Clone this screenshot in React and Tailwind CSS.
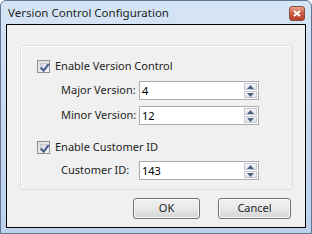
import React from "react";

const font = { fontFamily: '"Noto Sans", "Open Sans", sans-serif' };

function CheckBox({ label }) {
  return (
    <div className="flex items-center h-[20px]">
      <div className="w-[13px] h-[13px] shrink-0 border border-[#8e8f8f] bg-gradient-to-br from-[#dcdcdc] to-[#f8f8f8] p-[2px]">
        <div className="w-full h-full border border-[#c8c8c8] bg-gradient-to-br from-[#cfd3e0] to-[#f4f5f8] relative">
          <svg viewBox="0 0 9 9" className="absolute -left-[2px] -top-[2px] w-[11px] h-[11px]">
            <path d="M1.5 4.5 L3.8 7 L8 1.5" stroke="#4a5d91" strokeWidth="1.7" fill="none" />
          </svg>
        </div>
      </div>
      <span className="ml-[5px] text-[11px] text-[#1e1e1e] whitespace-nowrap">{label}</span>
    </div>
  );
}

function Spinner({ label, value }) {
  return (
    <div className="flex items-center">
      <span className="w-[102px] shrink-0 pl-[24px] text-[11px] text-[#1e1e1e] whitespace-nowrap">
        {label}
      </span>
      <div className="w-[120px] h-[19px] border border-[#abadb3] bg-white flex items-center">
        <span className="flex-1 pl-[2px] text-[11px] text-black leading-none">{value}</span>
        <div className="w-[15px] h-full flex flex-col gap-[1px] p-[1px]">
          <div className="flex-1 border border-[#c5c8d0] bg-gradient-to-b from-[#f6f6f8] to-[#dfe2e8] flex items-center justify-center">
            <svg width="7" height="4" viewBox="0 0 7 4"><path d="M0 4 L3.5 0 L7 4 Z" fill="#4d6185" /></svg>
          </div>
          <div className="flex-1 border border-[#c5c8d0] bg-gradient-to-b from-[#f6f6f8] to-[#dfe2e8] flex items-center justify-center">
            <svg width="7" height="4" viewBox="0 0 7 4"><path d="M0 0 L3.5 4 L7 0 Z" fill="#4d6185" /></svg>
          </div>
        </div>
      </div>
    </div>
  );
}

function Button({ children, width }) {
  return (
    <div
      className="h-[21px] border border-[#707070] rounded-[3px] bg-gradient-to-b from-[#f2f2f2] via-[#e8e8e8] to-[#d4d4d4] flex items-center justify-center text-[11px] text-[#1e1e1e] shadow-[inset_0_0_0_1px_#fbfbfb]"
      style={{ width }}
    >
      {children}
    </div>
  );
}

export default function App() {
  return (
    <div className="w-[312px] h-[234px] overflow-hidden" style={font}>
      <div className="w-full h-full border border-[#5f7591] rounded-t-[6px] bg-gradient-to-b from-[#d6e5f5] via-[#c7daf0] to-[#bcd2ec] flex flex-col">
        {/* title bar */}
        <div className="h-[23px] flex items-center justify-between pl-[7px] pr-[6px]">
          <span className="text-[11.5px] text-[#1e1e1e] pt-[1px]">Version Control Configuration</span>
          <div className="w-[16px] h-[15px] mt-[1px] rounded-[3px] border border-[#8a4a3c] bg-gradient-to-b from-[#e9a493] via-[#c95b44] to-[#b8402a] flex items-center justify-center">
            <svg width="8" height="7" viewBox="0 0 8 7">
              <path d="M1 1 L7 6 M7 1 L1 6" stroke="white" strokeWidth="2" />
            </svg>
          </div>
        </div>
        {/* client */}
        <div className="flex-1 mx-[5px] mb-[5px] border border-black bg-[#f0f0f0] flex flex-col">
          <div className="mt-[20px] ml-[13px] mr-[12px] h-[145px] border border-[#d5dfe5] rounded-[3px] shadow-[inset_1px_1px_0_#ffffff] pl-[16px] pt-[10px] flex flex-col">
            <CheckBox label="Enable Version Control" />
            <div className="mt-[5px] flex flex-col gap-[6px]">
              <Spinner label="Major Version:" value="4" />
              <Spinner label="Minor Version:" value="12" />
            </div>
            <div className="mt-[12px]">
              <CheckBox label="Enable Customer ID" />
            </div>
            <div className="mt-[4px]">
              <Spinner label="Customer ID:" value="143" />
            </div>
          </div>
          <div className="mt-[8px] mr-[14px] flex justify-end gap-[18px]">
            <Button width="67px">OK</Button>
            <Button width="73px">Cancel</Button>
          </div>
        </div>
      </div>
    </div>
  );
}
